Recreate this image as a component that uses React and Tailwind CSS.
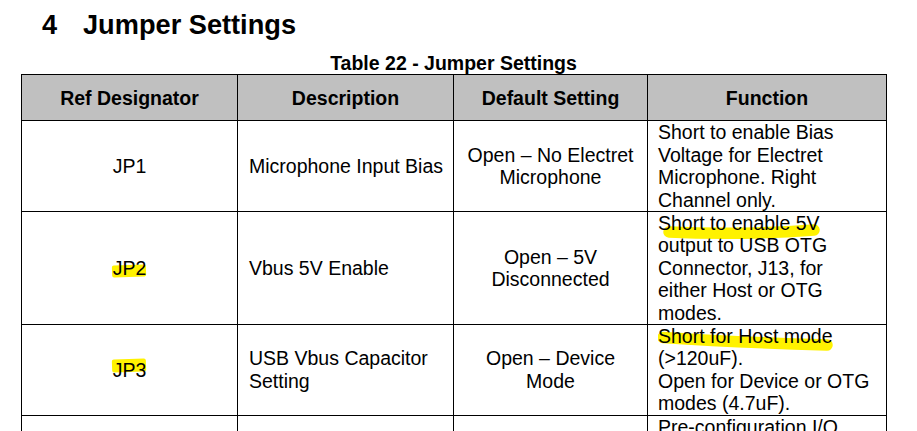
import React from "react"

const rows = [
  {
    ref: "JP1",
    desc: ["Microphone Input Bias"],
    def: ["Open – No Electret", "Microphone"],
    fn: ["Short to enable Bias", "Voltage for Electret", "Microphone. Right", "Channel only."],
  },
  {
    ref: "JP2",
    refMark: "top-[8px] h-[12px]",
    desc: ["Vbus 5V Enable"],
    def: ["Open – 5V", "Disconnected"],
    fn: ["Short to enable 5V", "output to USB OTG", "Connector, J13, for", "either Host or OTG", "modes."],
    fnMark: "M 11 20 Q 80 23.5 156 18",
  },
  {
    ref: "JP3",
    refMark: "top-[0px] h-[13px]",
    desc: ["USB Vbus Capacitor", "Setting"],
    def: ["Open – Device", "Mode"],
    fn: ["Short for Host mode", "(>120uF).", "Open for Device or OTG", "modes (4.7uF)."],
    fnMark: "M 5 12.5 Q 80 17.5 169 20",
  },
  {
    ref: "",
    desc: [""],
    def: [""],
    fn: ["Pre-configuration I/O", "", "", "", ""],
  },
]

const Lines = ({ lines }) =>
  lines.map((l, i) => (
    <React.Fragment key={i}>
      {l || "\u00a0"}
      {i < lines.length - 1 && <br />}
    </React.Fragment>
  ))

export default function App() {
  return (
    <div className="h-[431px] overflow-hidden bg-white text-black font-['Liberation_Sans',Arial,sans-serif]">
      <div className="pt-[9px] flex items-baseline text-[27.2px] leading-[31px] font-bold">
        <span className="ml-[42px] w-[41px]">4</span>
        <span>Jumper Settings</span>
      </div>

      <div className="mt-[12px] ml-[21px] w-[865px] text-center text-[19.5px] leading-[22.4px] font-bold">
        Table 22 - Jumper Settings
      </div>

      <table className="ml-[21px] w-[865px] table-fixed border-collapse text-[19.5px] leading-[22.4px]">
        <colgroup>
          <col className="w-[216px]" />
          <col className="w-[216px]" />
          <col className="w-[194px]" />
          <col className="w-[239px]" />
        </colgroup>
        <thead>
          <tr className="bg-[#c0c0c0] h-[46px]">
            <th className="border border-black font-bold text-center p-0">Ref Designator</th>
            <th className="border border-black font-bold text-center p-0">Description</th>
            <th className="border border-black font-bold text-center p-0">Default Setting</th>
            <th className="border border-black font-bold text-center p-0">Function</th>
          </tr>
        </thead>
        <tbody>
          {rows.map((r, i) => (
            <tr key={i}>
              <td className="border border-black text-center align-middle p-0">
                <span className="relative inline-block">
                  {r.refMark && (
                    <span className={`absolute -left-[1px] w-[34px] bg-[#fff200] rounded-[2px] -rotate-2 ${r.refMark}`} />
                  )}
                  <span className="relative">{r.ref}</span>
                </span>
              </td>
              <td className="border border-black text-left align-middle py-0 pl-[11px] pr-[8px]">
                <Lines lines={r.desc} />
              </td>
              <td className="border border-black text-center align-middle py-0 px-[8px]">
                <Lines lines={r.def} />
              </td>
              <td className="border border-black text-left align-top py-0 pl-[10px] pr-[4px]">
                <div className="relative">
                  {r.fnMark && (
                    <svg className="absolute left-0 top-0" width="200" height="40" viewBox="0 0 200 40">
                      <path d={r.fnMark} fill="none" stroke="#fff200" strokeWidth="11.5" strokeLinecap="round" />
                    </svg>
                  )}
                  <div className="relative">
                    <Lines lines={r.fn} />
                  </div>
                </div>
              </td>
            </tr>
          ))}
        </tbody>
      </table>
    </div>
  )
}
